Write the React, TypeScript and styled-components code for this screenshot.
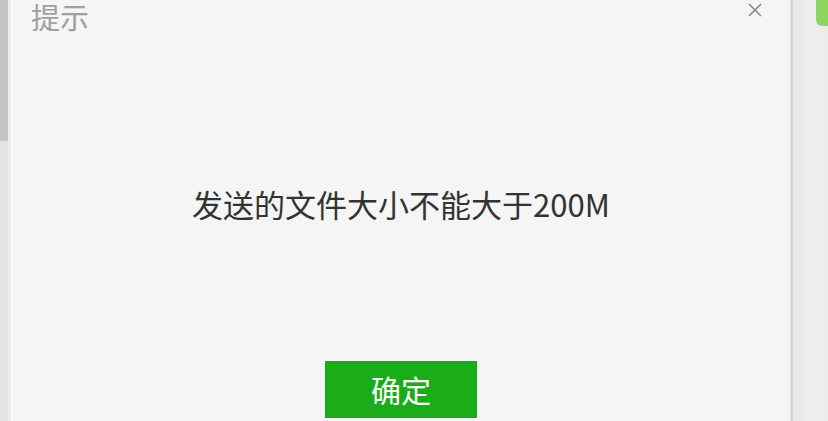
import React from 'react'
import styled, { createGlobalStyle } from 'styled-components'

// -- GLOBAL
const GlobalStyle = createGlobalStyle`
  html, body {
    margin: 0;
    padding: 0;
    width: 828px;
    height: 421px;
    overflow: hidden;
    background: #ebebeb;
    font-family: "Noto Sans CJK SC", "Noto Sans", sans-serif;
  }
`

// -- COMPONENT
const App: React.FunctionComponent = () => {
  return (
    <>
      <GlobalStyle />
      <Page>
        <LeftRail>
          <RailThumb />
        </LeftRail>
        <Dialog>
          <Header>
            <Title>提示</Title>
            <Close aria-label="close">
              <svg width="16" height="16" viewBox="0 0 16 16">
                <path d="M2 2 L14 14 M14 2 L2 14" stroke="#8a8a8a" strokeWidth="1.6" fill="none" />
              </svg>
            </Close>
          </Header>
          <Message>发送的文件大小不能大于200M</Message>
          <Footer>
            <OkButton>确定</OkButton>
          </Footer>
        </Dialog>
        <Divider />
        <RightPane>
          <GreenTab />
        </RightPane>
      </Page>
    </>
  )
}

// -- UI
const Page = styled.div`
  display: flex;
  width: 828px;
  height: 421px;
`

const LeftRail = styled.div`
  width: 8px;
  flex-shrink: 0;
  background: #e4e4e4;
  border-right: 3px solid #ececec;
  display: flex;
  flex-direction: column;
`

const RailThumb = styled.div`
  height: 141px;
  background: #c4c4c4;
`

const Dialog = styled.div`
  width: 778px;
  flex-shrink: 0;
  background: #f5f5f5;
  border-left: 1px solid #ffffff;
  display: flex;
  flex-direction: column;
`

const Header = styled.div`
  display: flex;
  justify-content: space-between;
  align-items: flex-start;
  height: 40px;
  padding: 0 27px 0 19px;
`

const Title = styled.div`
  font-size: 29px;
  line-height: 32px;
  color: #a0a0a0;
`

const Close = styled.div`
  margin-top: 2px;
  width: 16px;
  height: 16px;
  display: flex;
`

const Message = styled.div`
  margin-top: 144px;
  text-align: center;
  font-size: 31px;
  line-height: 40px;
  color: #333333;
`

const Footer = styled.div`
  display: flex;
  justify-content: center;
  margin-top: 137px;
`

const OkButton = styled.div`
  width: 152px;
  height: 57px;
  background: #1aad19;
  color: #ffffff;
  font-size: 30px;
  line-height: 57px;
  text-align: center;
`

const Divider = styled.div`
  width: 2px;
  flex-shrink: 0;
  background: #d6d6d6;
  border-left: 1px solid #e2e2e2;
`

const RightPane = styled.div`
  flex: 1;
  background: linear-gradient(to right, #e6e6e6, #eeeeee 40%, #ececec);
  display: flex;
  justify-content: flex-end;
  align-items: flex-start;
`

const GreenTab = styled.div`
  width: 12px;
  height: 26px;
  background: #8fd562;
  border-bottom-left-radius: 6px;
`

export default App
